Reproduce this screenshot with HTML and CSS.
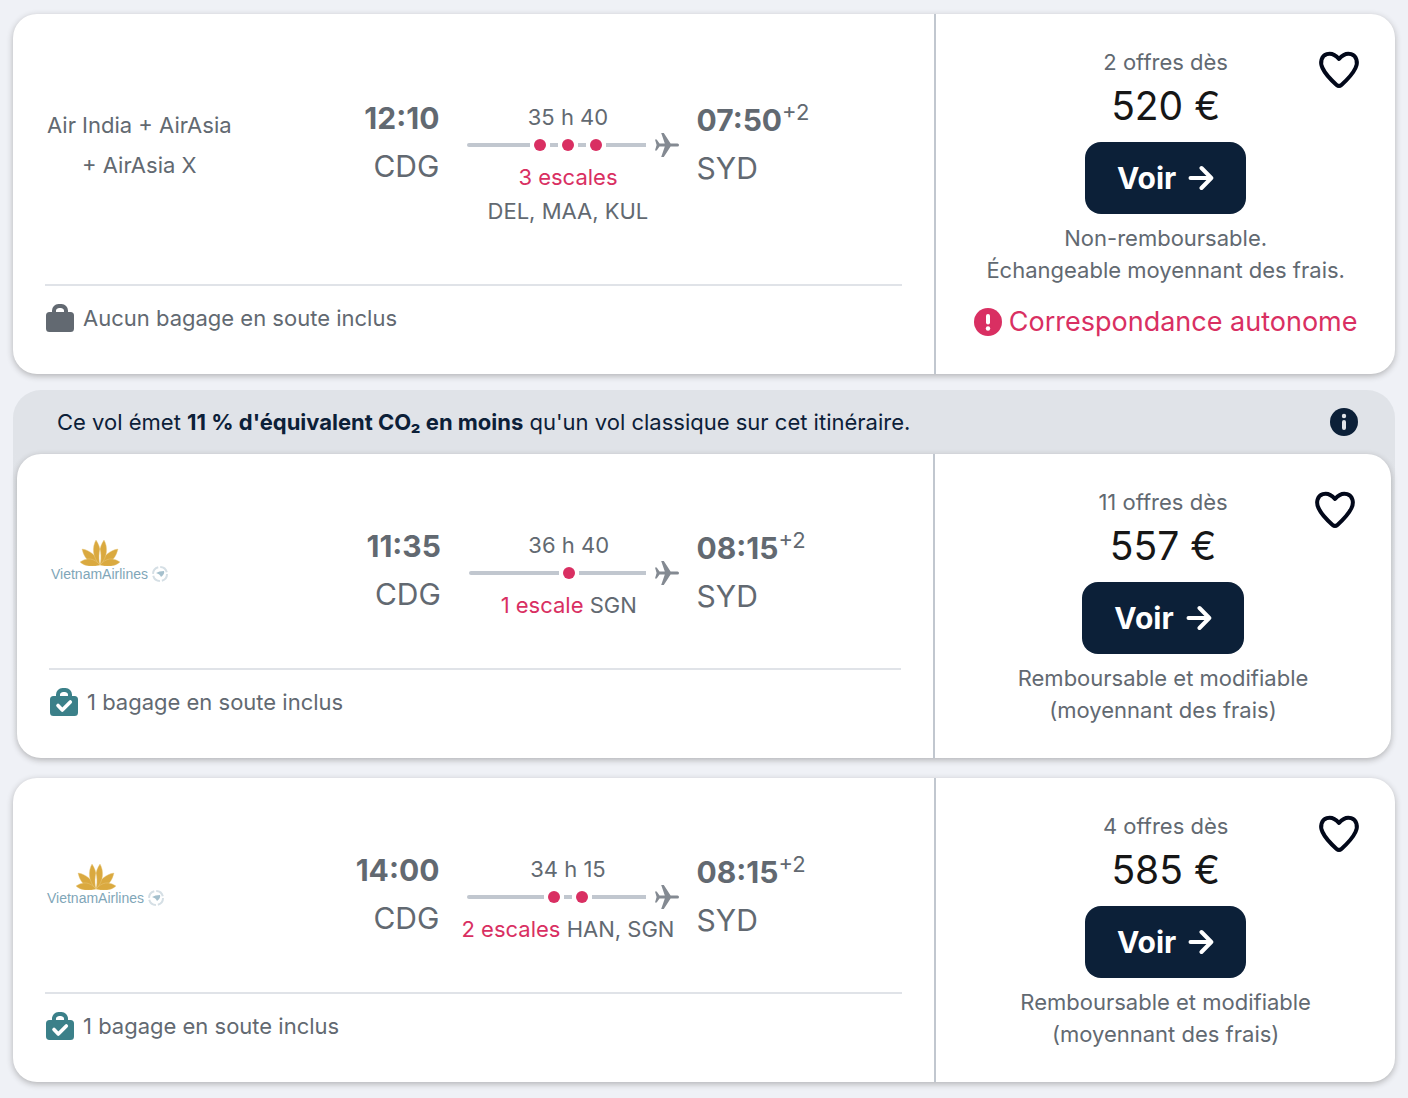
FILE: index.html
```html
<!DOCTYPE html>
<html lang="fr">
<head>
<meta charset="utf-8">
<meta name="viewport" content="width=device-width, initial-scale=1">
<title>Vols CDG – SYD</title>
<link rel="stylesheet" href="styles.css">
</head>
<body>
<svg class="sprite" aria-hidden="true">
  <symbol id="heart" viewBox="0 0 48 48"><path d="M24 13C20.500 9 16 6.800 11.800 8.200C6.200 10 4.800 16.500 7.500 22C10.300 28 17 34.800 21.600 38.900Q24 41 26.400 38.900C31 34.800 37.700 28 40.500 22C43.200 16.500 41.800 10 36.200 8.200C32 6.800 27.500 9 24 13Z" fill="none" stroke="currentColor" stroke-width="4" stroke-linejoin="round"/></symbol>
  <symbol id="arrow" viewBox="0 0 26 26"><path d="M2.500 13H23M13.500 3L23.300 13L13.500 23" fill="none" stroke="currentColor" stroke-width="4" stroke-linecap="round" stroke-linejoin="round"/></symbol>
  <symbol id="plane" viewBox="0 0 24 24"><path d="M0 6.500H1.700L4.500 10.500H9.800L6.200 0H8.800L15.600 10.500H22.500A1.500 1.500 0 0 1 22.500 13.500H15.600L8.800 24H6.200L9.800 13.500H4.500L1.700 17.500H0L1.600 12Z" fill="currentColor"/></symbol>
  <symbol id="bag" viewBox="0 0 28 28"><path d="M6 8V6.500A6.500 6.500 0 0 1 12.500 0h3A6.500 6.500 0 0 1 22 6.500V8h2.500A3.500 3.500 0 0 1 28 11.500V24.500A3.500 3.500 0 0 1 24.500 28h-21A3.500 3.500 0 0 1 0 24.500V11.500A3.500 3.500 0 0 1 3.500 8ZM10 8h8A3.500 3.500 0 0 0 15 4h-2A3.500 3.500 0 0 0 10 8Z" fill="currentColor" fill-rule="evenodd"/></symbol>
  <symbol id="check" viewBox="0 0 28 28"><path d="M8 17.500L12.300 22L20.300 14" fill="none" stroke="#fff" stroke-width="3.600" stroke-linecap="round" stroke-linejoin="round"/></symbol>
  <symbol id="alert" viewBox="0 0 28 28"><circle cx="14" cy="14" r="14" fill="currentColor"/><path d="M14 8V14.500" stroke="#fff" stroke-width="4" stroke-linecap="round"/><circle cx="14" cy="20.500" r="2.200" fill="#fff"/></symbol>
  <symbol id="info" viewBox="0 0 28 28"><circle cx="14" cy="14" r="14" fill="currentColor"/><path d="M14 14V20" stroke="#e0e3e8" stroke-width="4" stroke-linecap="round"/><circle cx="14" cy="8" r="2.200" fill="#e0e3e8"/></symbol>
  <symbol id="lotus" viewBox="0 0 40 26"><g fill="#daa93f" stroke="#ecd08c" stroke-width=".4"><path d="M20 25C13 24 5 22 2 9C10 10 17 16 20 25ZM20 25C27 24 35 22 38 9C30 10 23 16 20 25Z"/><path d="M20 25C12 17 12 7 16 0C21 7 22 17 20 25ZM20 25C28 17 28 7 24 0C19 7 18 17 20 25Z"/><path d="M20 25C14 27 5 27 0 22C7 17 14 18 20 25ZM20 25C26 27 35 27 40 22C33 17 26 18 20 25Z"/></g></symbol>
  <symbol id="alliance" viewBox="0 0 16 16"><circle cx="8" cy="8" r="7" fill="none" stroke="#d5dfe5" stroke-width="2" stroke-dasharray="9 2"/><path d="M4 7Q7 5 12 5Q13 8 9 11Q8 8 4 7Z" fill="#a5c0cd"/></symbol>
</svg>

<main class="results">
  <article class="card card-tall">
    <div class="details">
      <div class="leg">
        <div class="airline"><p class="airline-name">Air India + AirAsia<br>+ AirAsia X</p></div>
        <div class="departure"><p class="time">12:10</p><p class="airport">CDG</p></div>
        <div class="journey">
          <p>35 h 40</p>
          <div class="route">
            <div class="route-start"><span class="line"></span></div>
            <div class="stops"><i class="dot"></i><i class="dash"></i><i class="dot"></i><i class="dash"></i><i class="dot"></i></div>
            <div class="route-end"><span class="line"></span><svg class="plane"><use href="#plane"/></svg></div>
          </div>
          <p class="stop-text"><span class="stop-count">3 escales</span><br>DEL, MAA, KUL</p>
        </div>
        <div class="arrival"><p class="time">07:50<sup>+2</sup></p><p class="airport">SYD</p></div>
      </div>
      <div class="baggage"><svg class="icon"><use href="#bag"/></svg>Aucun bagage en soute inclus</div>
    </div>
    <div class="price-pane">
      <button class="save" type="button" aria-label="Enregistrer"><svg><use href="#heart"/></svg></button>
      <p>2 offres dès</p>
      <p class="price">520 €</p>
      <button class="select" type="button">Voir<svg><use href="#arrow"/></svg></button>
      <p>Non-remboursable.<br>Échangeable moyennant des frais.</p>
      <p class="warning"><svg class="icon"><use href="#alert"/></svg>Correspondance autonome</p>
    </div>
  </article>

  <section class="eco">
    <header class="eco-header">
      <p>Ce vol émet <strong>11 % d'équivalent CO₂ en moins</strong> qu'un vol classique sur cet itinéraire.</p>
      <button class="info" type="button" aria-label="Informations"><svg class="icon"><use href="#info"/></svg></button>
    </header>
    <article class="card">
      <div class="details">
        <div class="leg">
          <div class="airline"><div class="logo"><svg class="lotus"><use href="#lotus"/></svg><div class="logo-line"><span>VietnamAirlines</span><svg class="alliance"><use href="#alliance"/></svg></div></div></div>
          <div class="departure"><p class="time">11:35</p><p class="airport">CDG</p></div>
          <div class="journey">
            <p>36 h 40</p>
            <div class="route">
              <div class="route-start"><span class="line"></span></div>
              <div class="stops"><i class="dot"></i></div>
              <div class="route-end"><span class="line"></span><svg class="plane"><use href="#plane"/></svg></div>
            </div>
            <p class="stop-text"><span class="stop-count">1 escale</span> SGN</p>
          </div>
          <div class="arrival"><p class="time">08:15<sup>+2</sup></p><p class="airport">SYD</p></div>
        </div>
        <div class="baggage"><svg class="icon included"><use href="#bag"/><use href="#check"/></svg>1 bagage en soute inclus</div>
      </div>
      <div class="price-pane">
        <button class="save" type="button" aria-label="Enregistrer"><svg><use href="#heart"/></svg></button>
        <p>11 offres dès</p>
        <p class="price">557 €</p>
        <button class="select" type="button">Voir<svg><use href="#arrow"/></svg></button>
        <p>Remboursable et modifiable<br>(moyennant des frais)</p>
      </div>
    </article>
  </section>

  <article class="card">
    <div class="details">
      <div class="leg">
        <div class="airline"><div class="logo"><svg class="lotus"><use href="#lotus"/></svg><div class="logo-line"><span>VietnamAirlines</span><svg class="alliance"><use href="#alliance"/></svg></div></div></div>
        <div class="departure"><p class="time">14:00</p><p class="airport">CDG</p></div>
        <div class="journey">
          <p>34 h 15</p>
          <div class="route">
            <div class="route-start"><span class="line"></span></div>
            <div class="stops"><i class="dot"></i><i class="dash"></i><i class="dot"></i></div>
            <div class="route-end"><span class="line"></span><svg class="plane"><use href="#plane"/></svg></div>
          </div>
          <p class="stop-text"><span class="stop-count">2 escales</span> HAN, SGN</p>
        </div>
        <div class="arrival"><p class="time">08:15<sup>+2</sup></p><p class="airport">SYD</p></div>
      </div>
      <div class="baggage"><svg class="icon included"><use href="#bag"/><use href="#check"/></svg>1 bagage en soute inclus</div>
    </div>
    <div class="price-pane">
      <button class="save" type="button" aria-label="Enregistrer"><svg><use href="#heart"/></svg></button>
      <p>4 offres dès</p>
      <p class="price">585 €</p>
      <button class="select" type="button">Voir<svg><use href="#arrow"/></svg></button>
      <p>Remboursable et modifiable<br>(moyennant des frais)</p>
    </div>
  </article>
</main>
</body>
</html>
```
FILE: styles.css
```css
* { box-sizing: border-box; }
body {
  margin: 0;
  background: #eff1f6;
  color: #626971;
  font: 22px/32px Inter, "Liberation Sans", sans-serif;
}
p { margin: 0; }
button { border: 0; padding: 0; font: inherit; cursor: pointer; }
svg { display: block; flex: none; }
.sprite { position: absolute; width: 0; height: 0; }

.results {
  display: flex;
  flex-direction: column;
  gap: 16px;
  padding: 14px 13px 16px;
}

.card {
  display: grid;
  grid-template-columns: 2fr 1fr;
  background: #fff;
  border-radius: 24px;
  box-shadow: 0 2px 6px rgba(37, 32, 31, .3);
}

.eco {
  padding: 0 4px 4px;
  border-radius: 28px 28px 32px 32px;
  background: linear-gradient(#e0e3e8 64px, #eff1f6);
}
.eco-header {
  display: flex;
  align-items: center;
  justify-content: space-between;
  min-height: 64px;
  padding: 0 33px 0 40px;
  color: #0c2038;
}
.info { background: none; color: inherit; }

.details {
  display: flex;
  flex-direction: column;
  min-width: 0;
  padding: 0 32px;
}
.leg {
  flex: 1;
  display: grid;
  grid-template-columns: 22fr 24fr 30fr 24fr;
  padding-top: 68px;
}
.card-tall .leg { padding-top: 80px; }
.airline { margin-top: -68px; align-self: center; }
.card-tall .airline { margin-top: -88px; }
.airline-name { line-height: 40px; text-align: center; white-space: nowrap; }
.departure { text-align: right; }
.time { font-size: 30px; line-height: 48px; font-weight: 700; }
.airport { font-size: 30px; line-height: 48px; }
.arrival { padding-top: 2px; }
sup { font-size: 22px; font-weight: 400; line-height: 0; vertical-align: 11px; }

.journey { padding-top: 7px; text-align: center; }
.route {
  display: grid;
  grid-template-columns: 1fr auto 1fr;
  align-items: center;
  height: 24px;
  margin-bottom: 3px;
}
.route-start, .route-end { display: flex; align-items: center; }
.route-start { padding-left: 28px; }
.route-end { gap: 9px; padding-right: 18px; }
.line { flex: 1; height: 4px; background: #c1c7cf; }
.route-start .line { border-radius: 2px 0 0 2px; }
.stops { display: flex; align-items: center; gap: 4px; padding: 0 4px; }
.dot { width: 12px; height: 12px; border-radius: 50%; background: #d92f62; }
.dash { width: 8px; height: 4px; background: #c1c7cf; }
.plane { width: 24px; height: 24px; color: #848a92; }
.stop-text { line-height: 34px; white-space: nowrap; }
.stop-count { color: #d92f62; }

.baggage {
  display: flex;
  align-items: center;
  gap: 9px;
  padding: 16px 1px 40px;
  border-top: 2px solid #e0e3e8;
}
.icon { width: 28px; height: 28px; }
.included { color: #3b8089; }

.logo { width: 120px; }
.lotus { width: 40px; height: 26px; margin-left: 31px; }
.logo-line { display: flex; align-items: center; gap: 4px; margin-left: 2px; }
.logo-line span { color: #7fa6b8; font: 14px/16px "Liberation Sans", Arial, sans-serif; }
.alliance { width: 16px; height: 16px; }

.price-pane {
  position: relative;
  display: flex;
  flex-direction: column;
  align-items: center;
  padding: 32px 16px;
  border-left: 2px solid #c1c7cf;
  text-align: center;
}
.price { color: #161616; font-size: 39px; line-height: 56px; }
.select {
  display: flex;
  align-items: center;
  gap: 12px;
  height: 72px;
  margin: 8px 0;
  padding: 0 32px;
  border-radius: 16px;
  background: #0c2038;
  color: #fff;
  font-size: 30px;
  font-weight: 700;
}
.select svg { width: 26px; height: 26px; }
.save { position: absolute; top: 32px; right: 32px; background: none; color: #02081a; }
.save svg { width: 48px; height: 48px; }
.warning {
  display: flex;
  align-items: center;
  gap: 7px;
  margin-top: 16px;
  color: #d92f62;
  font-size: 27px;
  line-height: 40px;
  white-space: nowrap;
}
```
